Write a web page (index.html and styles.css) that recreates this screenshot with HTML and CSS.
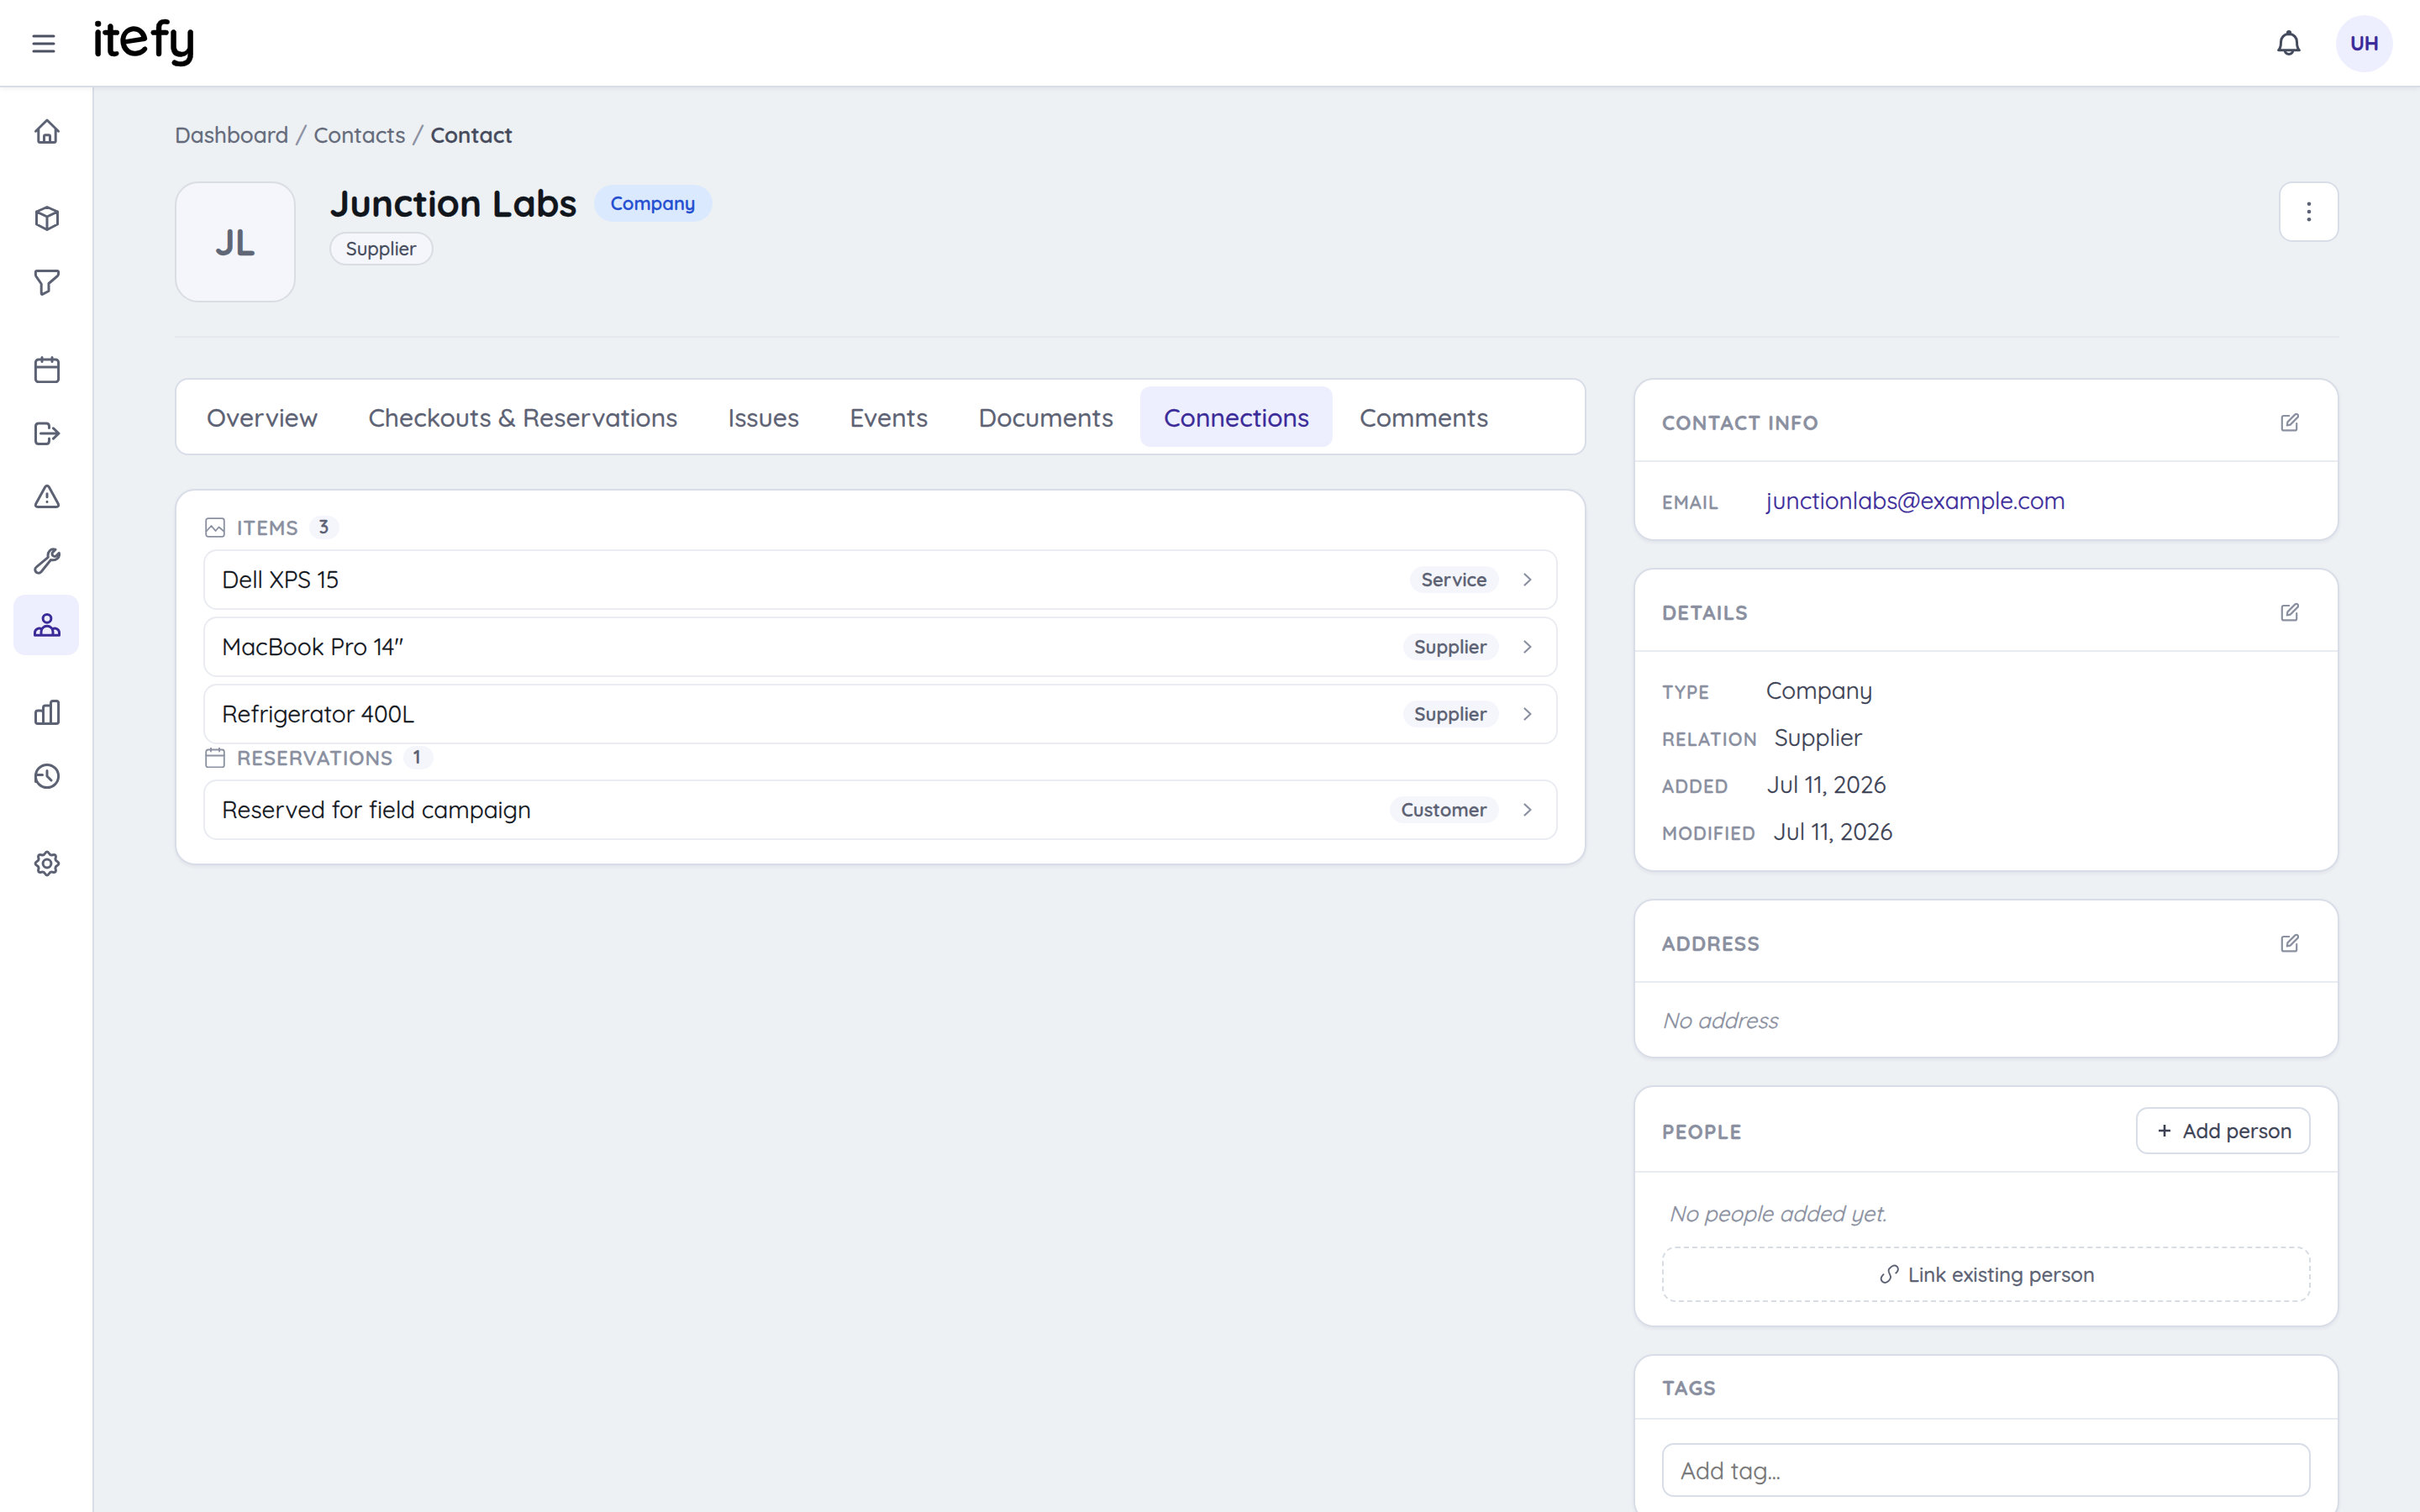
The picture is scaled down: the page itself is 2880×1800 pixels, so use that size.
FILE: index.html
```html
<!DOCTYPE html>
<html lang="en">
<head>
<meta charset="utf-8">
<title>Junction Labs – itefy</title>
<link rel="stylesheet" href="styles.css">
</head>
<body>
<svg class="sprite" aria-hidden="true">
  <symbol id="chevron" viewBox="0 0 28 28"><path d="M10.5 7.5 17.5 14l-7 6.5"/></symbol>
  <symbol id="edit" viewBox="-1.200 -.8 24 24"><path d="M11 4.2H4.6Q2.6 4.2 2.6 6.2V19.6Q2.6 21.6 4.6 21.6H18Q20 21.6 20 19.6V13.2M8.6 15.6 9.2 11.6 18.2 2.6Q19.8 1.4 21.3 2.8 22.6 4.3 21.4 5.8L12.4 14.8Z"/></symbol>
</svg>
<header class="topbar">
  <svg class="menu" viewBox="0 0 32 32"><path d="M4 7H28M4 16H28M4 25H28"/></svg>
  <svg class="logo" viewBox="0 0 124 72"><text y="51" x="0 11.500">it</text><text class="mark" transform="translate(33.500 53) rotate(-9)">e</text><text y="51" x="68 89.500">fy</text></svg>
  <svg class="bell" viewBox="0 0 32 32"><circle cx="16" cy="3.2" r="1.6"/><path d="M16 4.5C10 4.5 6.5 9 6.5 14 6.5 19 6 21.5 3.6 23.8H28.4C26 21.5 25.500 19 25.500 14 25.500 9 22 4.500 16 4.500ZM11.200 24.500A4.900 4.900 0 0 0 20.800 24.500"/></svg>
  <span class="user">UH</span>
</header>
<div class="shell">
  <nav class="sidebar">
    <div class="group">
      <a><svg viewBox="0 0 32 32"><path d="M2.500 16.200 16 3 29.500 16.200M5.800 13.500V27.500Q5.800 29.500 7.800 29.500H24.200Q26.200 29.500 26.200 27.500V13.500M12.500 29V22.200Q12.500 20.800 14 20.800H18Q19.500 20.800 19.500 22.200V29"/></svg></a>
    </div>
    <div class="group">
      <a><svg viewBox="0 0 32 32"><path d="M16 2.500 28.500 8V23L16 29.500 3.500 23V8ZM3.500 8 16 14 28.500 8M16 14V29.500"/></svg></a>
      <a><svg viewBox="0 0 32 32"><path d="M4 2.500H28Q29.600 2.500 29.600 4V6Q29.600 7.500 28.500 8.500L18 17.500V26.500L10.500 30.300Q9.200 30.800 9.200 29V18L2.900 8.800Q2.400 8 2.400 7V4Q2.400 2.500 4 2.500Z"/></svg></a>
    </div>
    <div class="group">
      <a><svg viewBox="0 0 32 32"><rect x="2.400" y="4" width="27.200" height="26.800" rx="3.500"/><path d="M2.400 13H29.600M10 1.500V6.500M22 1.500V6.500"/></svg></a>
      <a><svg viewBox="0 0 32 32"><path d="M18.500 9.500V7.500Q18.500 4 15 4H6Q2.500 4 2.500 7.500V25Q2.500 28.500 6 28.500H15Q18.500 28.500 18.500 25V22M8.500 16H30M23.500 9.800 30 16 23.500 22.200"/></svg></a>
      <a><svg viewBox="0 0 32 32"><path d="M13.700 3.700Q16 .9 18.300 3.700L29.300 23.800Q30.500 27.500 27 27.500H5Q1.500 27.500 2.700 23.800ZM16 11.800V15.800M16 21.200V21.400"/></svg></a>
      <a><svg viewBox="0 0 32 32"><path d="M26 2.300 22.300 6Q21.500 8 23 9.500 24.500 11 26.300 10.200L30.300 6.300C31.500 11.500 27 16 20.500 14.500L9 28.800C6.500 31.500 1.500 30 1.800 25.500Q2 24 3.500 22.800L17.300 11.300C16 5 20.500.5 26 2.300Z"/></svg></a>
      <a class="active"><svg viewBox="0 0 32 32"><circle cx="16" cy="8.300" r="4.900"/><path d="M1.500 28.300V24.800A5 5 0 0 1 9.600 21.200M22.400 21.200A5 5 0 0 1 30.500 24.800V28.300M9 28.300V24.200A7 7 0 0 1 23 24.200V28.300M1.500 28.300H30.500"/></svg></a>
    </div>
    <div class="group">
      <a><svg viewBox="0 0 32 32"><path d="M2.500 16.500Q2.500 14 5 14H8.500Q11.500 14 11.500 16.500V29.600H5Q2.500 29.600 2.500 27ZM11.500 29.600V10.500Q11.500 8 14 8H20.500V29.600ZM20.500 29.600V5Q20.500 2.400 23 2.400H27Q29.600 2.400 29.600 5V27Q29.600 29.600 27 29.600Z"/></svg></a>
      <a><svg viewBox="0 0 32 32"><circle cx="16" cy="16" r="13.600"/><path d="M16 9.500V16L21 21M2.500 14.500H10.500M2.500 14.500V22.500"/></svg></a>
    </div>
    <div class="group">
      <a><svg viewBox="0 0 32 32"><circle cx="16" cy="16" r="4.900"/><path d="M28.060 13.600Q31.800 16 28.060 18.400Q25.180 19.800 26.230 22.830Q27.170 27.170 22.830 26.230Q19.800 25.180 18.400 28.060Q16 31.800 13.600 28.060Q12.200 25.180 9.170 26.230Q4.830 27.170 5.770 22.830Q6.820 19.800 3.940 18.400Q.2 16 3.940 13.600Q6.820 12.200 5.770 9.170Q4.830 4.830 9.170 5.770Q12.200 6.820 13.600 3.940Q16 .2 18.400 3.940Q19.800 6.820 22.830 5.770Q27.170 4.830 26.230 9.170Q25.180 12.200 28.060 13.600Z"/></svg></a>
    </div>
  </nav>
  <main class="page">
    <div class="crumbs"><a>Dashboard</a><i>/</i><a>Contacts</a><i>/</i><b>Contact</b></div>
    <section class="hero">
      <div class="avatar">JL</div>
      <div class="identity">
        <div class="title"><h1>Junction Labs</h1><span class="kind">Company</span></div>
        <span class="relation">Supplier</span>
      </div>
      <button class="more"><svg viewBox="0 0 32 32"><circle cx="16" cy="6.800" r="2.300"/><circle cx="16" cy="16" r="2.300"/><circle cx="16" cy="25.200" r="2.300"/></svg></button>
    </section>
    <div class="columns">
      <div class="primary">
        <div class="tabs">
          <a>Overview</a><a>Checkouts &amp; Reservations</a><a>Issues</a><a>Events</a><a>Documents</a><a class="active">Connections</a><a>Comments</a>
        </div>
        <section class="card connections">
          <h2><svg viewBox="0 0 24 24"><rect x="1.200" y="1.200" width="21.600" height="21.600" rx="2.500"/><path d="M1.500 16.500 7.500 10 12.500 16 16.500 11.500 22.500 16.500"/></svg>ITEMS<span>3</span></h2>
          <div class="rows">
            <a class="row"><span class="name">Dell XPS 15</span><span class="pill">Service</span><svg><use href="#chevron"/></svg></a>
            <a class="row"><span class="name">MacBook Pro 14″</span><span class="pill">Supplier</span><svg><use href="#chevron"/></svg></a>
            <a class="row"><span class="name">Refrigerator 400L</span><span class="pill">Supplier</span><svg><use href="#chevron"/></svg></a>
          </div>
          <h2><svg viewBox="0 0 24 24"><rect x="1.200" y="2.500" width="21.600" height="21" rx="2.500"/><path d="M1.200 9.500H22.800M7 .5V4.500M17 .5V4.500"/></svg>RESERVATIONS<span>1</span></h2>
          <div class="rows">
            <a class="row"><span class="name">Reserved for field campaign</span><span class="pill">Customer</span><svg><use href="#chevron"/></svg></a>
          </div>
        </section>
      </div>
      <aside class="secondary">
        <section class="card">
          <header><h3>CONTACT INFO</h3><button class="edit"><svg><use href="#edit"/></svg></button></header>
          <dl><div><dt>EMAIL</dt><dd class="link">junctionlabs@example.com</dd></div></dl>
        </section>
        <section class="card">
          <header><h3>DETAILS</h3><button class="edit"><svg><use href="#edit"/></svg></button></header>
          <dl>
            <div><dt>TYPE</dt><dd>Company</dd></div>
            <div><dt>RELATION</dt><dd>Supplier</dd></div>
            <div><dt>ADDED</dt><dd>Jul 11, 2026</dd></div>
            <div><dt>MODIFIED</dt><dd>Jul 11, 2026</dd></div>
          </dl>
        </section>
        <section class="card">
          <header><h3>ADDRESS</h3><button class="edit"><svg><use href="#edit"/></svg></button></header>
          <p class="empty">No address</p>
        </section>
        <section class="card">
          <header><h3>PEOPLE</h3><button class="add"><svg viewBox="0 0 24 24"><path d="M12 5V19M5 12H19"/></svg>Add person</button></header>
          <div class="people">
            <p class="none">No people added yet.</p>
            <button class="attach"><svg viewBox="0 0 24 24"><path d="M11.500 5.200 14 2.900Q17.500.3 20.500 2.700 23.300 6 20.500 9.300L19.300 10.500M4.500 12.200 3 13.800Q.200 17.300 3 20.500 6 23.300 9.500 20.800L11.500 18.800Q14.200 15.800 12.200 12.500L11 9.500Q10 6.800 11.500 5.200"/></svg>Link existing person</button>
          </div>
        </section>
        <section class="card">
          <header class="compact"><h3>TAGS</h3></header>
          <div class="tags"><input type="text" placeholder="Add tag..."></div>
        </section>
      </aside>
    </div>
  </main>
</div>
</body>
</html>
```
FILE: styles.css
```css
* { box-sizing: border-box; }
body {
  margin: 0;
  height: 1800px;
  overflow: hidden;
  background: #edf1f4;
  color: #11151c;
  font-family: Quicksand, Lato, sans-serif;
  -webkit-text-stroke: .3px;
}
h1, h2, h3, p, dl, dd { margin: 0; }
svg {
  flex: none;
  fill: none;
  stroke: currentColor;
  stroke-linecap: round;
  stroke-linejoin: round;
}
button, input { font-family: inherit; }
.sprite { display: none; }

.topbar {
  position: relative;
  z-index: 1;
  display: flex;
  align-items: center;
  height: 104px;
  padding: 2px 32px 0 36px;
  background: #fff;
  border-bottom: 2px solid #d8dde7;
  box-shadow: 0 2px 6px rgba(30, 40, 70, .06);
}
.menu { width: 32px; height: 32px; color: #4b5163; stroke-width: 3; }
.logo { width: 124px; height: 72px; margin-left: 42px; overflow: visible; }
.logo text {
  font-size: 59px;
  font-weight: 600;
  fill: #000;
  stroke: #000;
  stroke-width: .5;
}
.logo .mark { font-size: 65px; stroke: none; }
.bell { width: 32px; height: 32px; margin-left: auto; color: #444b5c; stroke-width: 3; }
.user {
  width: 68px;
  height: 68px;
  margin-left: 40px;
  border-radius: 50%;
  background: #eeeffe;
  color: #3b2b99;
  font-size: 24px;
  font-weight: 700;
  line-height: 67px;
  text-align: center;
}

.shell { display: flex; height: 1696px; }
.sidebar {
  display: flex;
  flex: none;
  flex-direction: column;
  gap: 32px;
  width: 112px;
  padding: 16px;
  background: #fff;
  border-right: 2px solid #d8dde7;
}
.group { display: flex; flex-direction: column; gap: 4px; }
.group a {
  display: flex;
  align-items: center;
  justify-content: center;
  width: 78px;
  height: 72px;
  padding-left: 2px;
  border-radius: 14px;
  color: #5c6273;
}
.group svg { width: 32px; height: 32px; stroke-width: 3; }
.group .active { background: #eeeffe; color: #3b2b99; }

.page { flex: 1; padding: 40px 96px 0; }
.crumbs {
  display: flex;
  gap: 8px;
  height: 32px;
  color: #646a7a;
  font-size: 26px;
  font-weight: 500;
  line-height: 34px;
}
.crumbs i { font-style: normal; color: #8a90a0; }
.crumbs b { font-weight: 600; color: #454b5c; }

.hero {
  display: flex;
  height: 186px;
  margin-top: 40px;
  border-bottom: 2px solid #e6eaee;
}
.avatar {
  width: 144px;
  height: 144px;
  border: 2px solid #dadee3;
  border-radius: 28px;
  background: #f4f6fb;
  color: #5f6777;
  font-size: 44px;
  font-weight: 700;
  line-height: 140px;
  text-align: center;
}
.identity { margin-left: 40px; }
.title { display: flex; align-items: center; gap: 20px; height: 52px; }
.title h1 { font-size: 44px; line-height: 52px; }
.kind {
  height: 44px;
  padding: 0 20px;
  border-radius: 22px;
  background: #dbe9fe;
  color: #244fd0;
  font-size: 22px;
  font-weight: 600;
  line-height: 44px;
}
.relation {
  display: inline-block;
  height: 40px;
  margin-top: 8px;
  padding: 0 18px;
  border: 2px solid #dadee3;
  border-radius: 20px;
  background: #f4f6fb;
  color: #454b5c;
  font-size: 22px;
  font-weight: 500;
  line-height: 36px;
}
.more {
  display: flex;
  align-items: center;
  justify-content: center;
  width: 72px;
  height: 72px;
  margin-left: auto;
  padding: 0;
  border: 2px solid #d8dde7;
  border-radius: 16px;
  background: #fff;
  color: #5c6273;
}
.more svg { width: 32px; height: 32px; fill: currentColor; stroke: none; }

.columns { display: grid; grid-template-columns: 1680px 840px; gap: 56px; margin-top: 48px; }
.tabs {
  display: flex;
  gap: 4px;
  height: 92px;
  padding: 8px;
  border: 2px solid #d8dde7;
  border-radius: 16px;
  background: #fff;
}
.tabs a {
  padding: 0 28px;
  border-radius: 12px;
  color: #5c6273;
  font-size: 30px;
  font-weight: 500;
  line-height: 74px;
}
.tabs .active { background: #eeeffe; color: #3b2b99; }

.card {
  border: 2px solid #d8dde7;
  border-radius: 24px;
  background: #fff;
  box-shadow: 0 2px 4px rgba(30, 40, 70, .06);
}
.connections { margin-top: 40px; padding: 28px 32px; }
.connections h2 {
  display: flex;
  align-items: center;
  height: 32px;
  margin-bottom: 10px;
  padding-left: 2px;
  color: #8a90a0;
  font-size: 24px;
  font-weight: 600;
  line-height: 28px;
  letter-spacing: .96px;
}
.connections h2 svg { width: 24px; height: 24px; margin-right: 14px; stroke-width: 1.8; }
.connections h2 span {
  min-width: 36px;
  height: 28px;
  margin-left: 12px;
  padding: 0 12px;
  border-radius: 14px;
  background: #f4f6fb;
  color: #5c6273;
  font-size: 22px;
  font-weight: 600;
  line-height: 27px;
  letter-spacing: 0;
}
.rows { display: flex; flex-direction: column; gap: 8px; }
.row {
  display: flex;
  align-items: center;
  height: 72px;
  padding: 0 20px;
  border: 2px solid #eaecf1;
  border-radius: 16px;
}
.name { flex: 1; padding-bottom: 2px; font-size: 28px; }
.pill {
  height: 32px;
  padding: 0 14px;
  border-radius: 16px;
  background: #f4f6fb;
  color: #5c6273;
  font-size: 22px;
  font-weight: 600;
  line-height: 32px;
  letter-spacing: .1px;
}
.row svg { width: 28px; height: 28px; margin-left: 20px; color: #8a90a0; stroke-width: 2.2; }

.secondary { display: flex; flex-direction: column; gap: 32px; }
.secondary header {
  display: flex;
  align-items: center;
  justify-content: space-between;
  padding: 24px 32px 20px;
  border-bottom: 2px solid #e8ebf0;
}
h3 {
  padding-top: 2px;
  color: #8a90a0;
  font-size: 24px;
  font-weight: 700;
  line-height: 28px;
  letter-spacing: 1.2px;
}
.compact h3 { padding: 0 0 2px; }
.edit {
  display: flex;
  align-items: center;
  justify-content: center;
  width: 52px;
  height: 52px;
  padding: 0;
  border: 0;
  background: none;
  color: #8a90a0;
}
.edit svg { width: 24px; height: 24px; stroke-width: 2.2; }
dl { display: flex; flex-direction: column; gap: 20px; padding: 28px 32px; }
dl div { display: flex; align-items: baseline; gap: 20px; height: 36px; }
dt { min-width: 104px; color: #8a90a0; font-size: 22px; font-weight: 600; letter-spacing: 1.1px; }
dd { color: #3c4254; font-size: 28px; line-height: 36px; }
.link { color: #3b2b99; }
.empty, .none { color: #8a90a0; font-size: 26px; font-style: italic; line-height: 34px; }
.empty { height: 88px; padding: 28px 32px; }
.add {
  display: flex;
  align-items: center;
  gap: 10px;
  width: 208px;
  height: 56px;
  margin: 0;
  padding: 0 0 0 20px;
  border: 2px solid #d8dde7;
  border-radius: 14px;
  background: #fff;
  color: #3c4254;
  font-size: 24px;
  font-weight: 500;
  white-space: nowrap;
}
.add svg { width: 24px; height: 24px; stroke-width: 2.6; stroke-linecap: butt; }
.people { padding: 32px 32px 28px; }
.none { height: 56px; padding-left: 8px; }
.attach {
  display: flex;
  align-items: center;
  justify-content: center;
  gap: 10px;
  width: 100%;
  height: 66px;
  padding: 0 0 0 2px;
  border: 2px dashed #d8dde3;
  border-radius: 16px;
  background: #fff;
  color: #5c6273;
  font-size: 24px;
  font-weight: 500;
}
.attach svg { width: 24px; height: 24px; stroke-width: 1.9; }
.tags { padding: 28px 32px; }
.tags input {
  display: block;
  width: 100%;
  height: 64px;
  padding: 0 20px;
  border: 2px solid #d8dde7;
  border-radius: 14px;
  font-size: 28px;
}
.tags input::placeholder { color: #757575; }
```
